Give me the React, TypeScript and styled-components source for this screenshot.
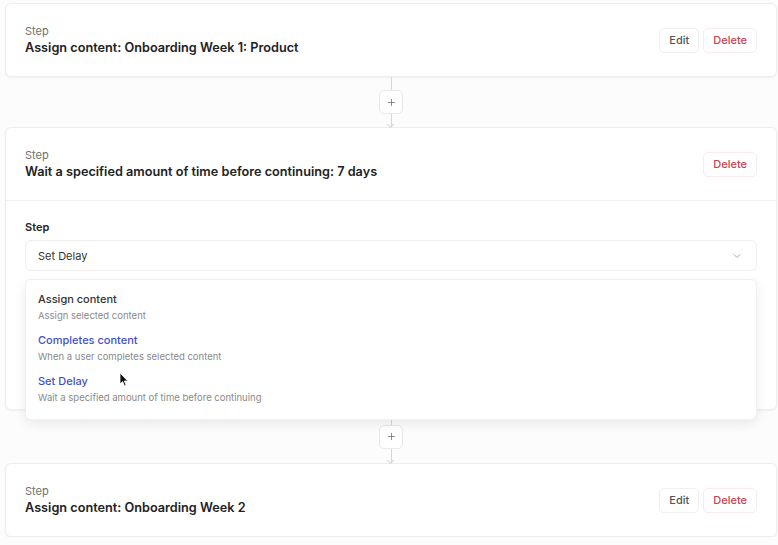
import React from 'react';
import styled, { createGlobalStyle } from 'styled-components';
import { Plus, ChevronDown } from 'lucide-react';

const GlobalStyle = createGlobalStyle`
  body {
    margin: 0;
    background: #fcfcfc;
    font-family: Inter, 'Noto Sans', sans-serif;
    color: #222;
  }
`;

const Flow = styled.div`
  display: flex;
  flex-direction: column;
  padding: 3px 1px 0 5px;
`;

const Card = styled.div`
  background: #fff;
  border: 1px solid #eeeeee;
  border-radius: 6px;
  box-shadow: 0 1px 2px rgba(0, 0, 0, 0.05);
`;

const Header = styled.div<{ divided?: boolean }>`
  display: flex;
  align-items: center;
  justify-content: space-between;
  height: 72px;
  padding: 0 19px;
  border-bottom: ${({ divided }) => (divided ? '1px solid #f0f0f0' : 'none')};
`;

const Meta = styled.div`
  display: flex;
  flex-direction: column;
`;

const Kicker = styled.span`
  font-size: 11px;
  line-height: 16px;
  color: #6f6f6f;
`;

const Title = styled.span`
  font-size: 12.7px;
  line-height: 18px;
  font-weight: 600;
  color: #222;
`;

const Actions = styled.div`
  display: flex;
  gap: 4px;
`;

const Button = styled.button<{ danger?: boolean }>`
  height: 25px;
  padding: 0 9px;
  border: 1px solid ${({ danger }) => (danger ? '#f7eced' : '#efefef')};
  border-radius: 5px;
  background: #fff;
  font-family: inherit;
  font-size: 11px;
  font-weight: 500;
  color: ${({ danger }) => (danger ? '#c84452' : '#555')};
`;

const Body = styled.div`
  height: 208px;
  padding: 18px 19px 0;
  box-sizing: border-box;
`;

const FieldLabel = styled.div`
  font-size: 11px;
  font-weight: 600;
  line-height: 16px;
  margin-bottom: 5px;
`;

const SelectWrap = styled.div`
  position: relative;
`;

const Select = styled.div`
  display: flex;
  align-items: center;
  justify-content: space-between;
  height: 31px;
  box-sizing: border-box;
  padding: 0 13px 0 12px;
  border: 1px solid #eeeeee;
  border-radius: 6px;
  font-size: 11px;
  color: #333;
`;

const Menu = styled.div`
  position: absolute;
  top: calc(100% + 8px);
  left: 0;
  right: 0;
  z-index: 5;
  padding: 6px 0 10px;
  background: #fff;
  border: 1px solid #f0f0f0;
  border-radius: 6px;
  box-shadow: 0 4px 12px rgba(0, 0, 0, 0.08);
`;

const Option = styled.div`
  display: flex;
  flex-direction: column;
  padding: 5px 12px 4px;
`;

const OptionTitle = styled.span<{ active?: boolean }>`
  font-size: 11px;
  line-height: 16px;
  font-weight: 450;
  color: ${({ active }) => (active ? '#3f51c9' : '#333')};
`;

const OptionDesc = styled.span`
  margin-top: 2px;
  font-size: 9.5px;
  line-height: 14px;
  color: #8a8a8a;
`;

const Cursor = styled.svg`
  position: absolute;
  left: 93px;
  top: 92px;
`;

const Connector = styled.div<{ h: number }>`
  display: flex;
  flex-direction: column;
  align-items: center;
  height: ${({ h }) => h}px;
`;

const Line = styled.div`
  flex: 1;
  width: 1px;
  background: #d6d6d6;
`;

const ArrowLine = styled(Line)`
  position: relative;
  &::after {
    content: '';
    position: absolute;
    bottom: 0;
    left: -3px;
    width: 4px;
    height: 4px;
    border-right: 1px solid #d6d6d6;
    border-bottom: 1px solid #d6d6d6;
    transform: rotate(45deg);
    transform-origin: center;
  }
`;

const AddButton = styled.div`
  display: flex;
  align-items: center;
  justify-content: center;
  width: 24px;
  height: 24px;
  box-sizing: border-box;
  border: 1px solid #e8e8e8;
  border-radius: 5px;
  background: #fff;
  color: #666;
`;

const Link = ({ h }: { h: number }) => (
  <Connector h={h}>
    <Line />
    <AddButton>
      <Plus size={11} strokeWidth={1.6} />
    </AddButton>
    <ArrowLine />
  </Connector>
);

const options = [
  { title: 'Assign content', desc: 'Assign selected content', active: false },
  { title: 'Completes content', desc: 'When a user completes selected content', active: true },
  { title: 'Set Delay', desc: 'Wait a specified amount of time before continuing', active: true },
];

export default function App() {
  return (
    <>
      <GlobalStyle />
      <Flow>
        <Card>
          <Header>
            <Meta>
              <Kicker>Step</Kicker>
              <Title>Assign content: Onboarding Week 1: Product</Title>
            </Meta>
            <Actions>
              <Button>Edit</Button>
              <Button danger>Delete</Button>
            </Actions>
          </Header>
        </Card>

        <Link h={50} />

        <Card>
          <Header divided>
            <Meta>
              <Kicker>Step</Kicker>
              <Title>Wait a specified amount of time before continuing: 7 days</Title>
            </Meta>
            <Actions>
              <Button danger>Delete</Button>
            </Actions>
          </Header>
          <Body>
            <FieldLabel>Step</FieldLabel>
            <SelectWrap>
              <Select>
                <span>Set Delay</span>
                <ChevronDown size={12} color="#aaa" />
              </Select>
              <Menu>
                {options.map((o) => (
                  <Option key={o.title}>
                    <OptionTitle active={o.active}>{o.title}</OptionTitle>
                    <OptionDesc>{o.desc}</OptionDesc>
                  </Option>
                ))}
                <Cursor width="10" height="15" viewBox="0 0 10 15">
                  <path d="M1 1 L1 12 L3.6 9.6 L5.6 14 L7.2 13.3 L5.3 9 L8.8 9 Z" fill="#111" stroke="#fff" strokeWidth="0.8" />
                </Cursor>
              </Menu>
            </SelectWrap>
          </Body>
        </Card>

        <Link h={53} />

        <Card>
          <Header>
            <Meta>
              <Kicker>Step</Kicker>
              <Title>Assign content: Onboarding Week 2</Title>
            </Meta>
            <Actions>
              <Button>Edit</Button>
              <Button danger>Delete</Button>
            </Actions>
          </Header>
        </Card>
      </Flow>
    </>
  );
}
